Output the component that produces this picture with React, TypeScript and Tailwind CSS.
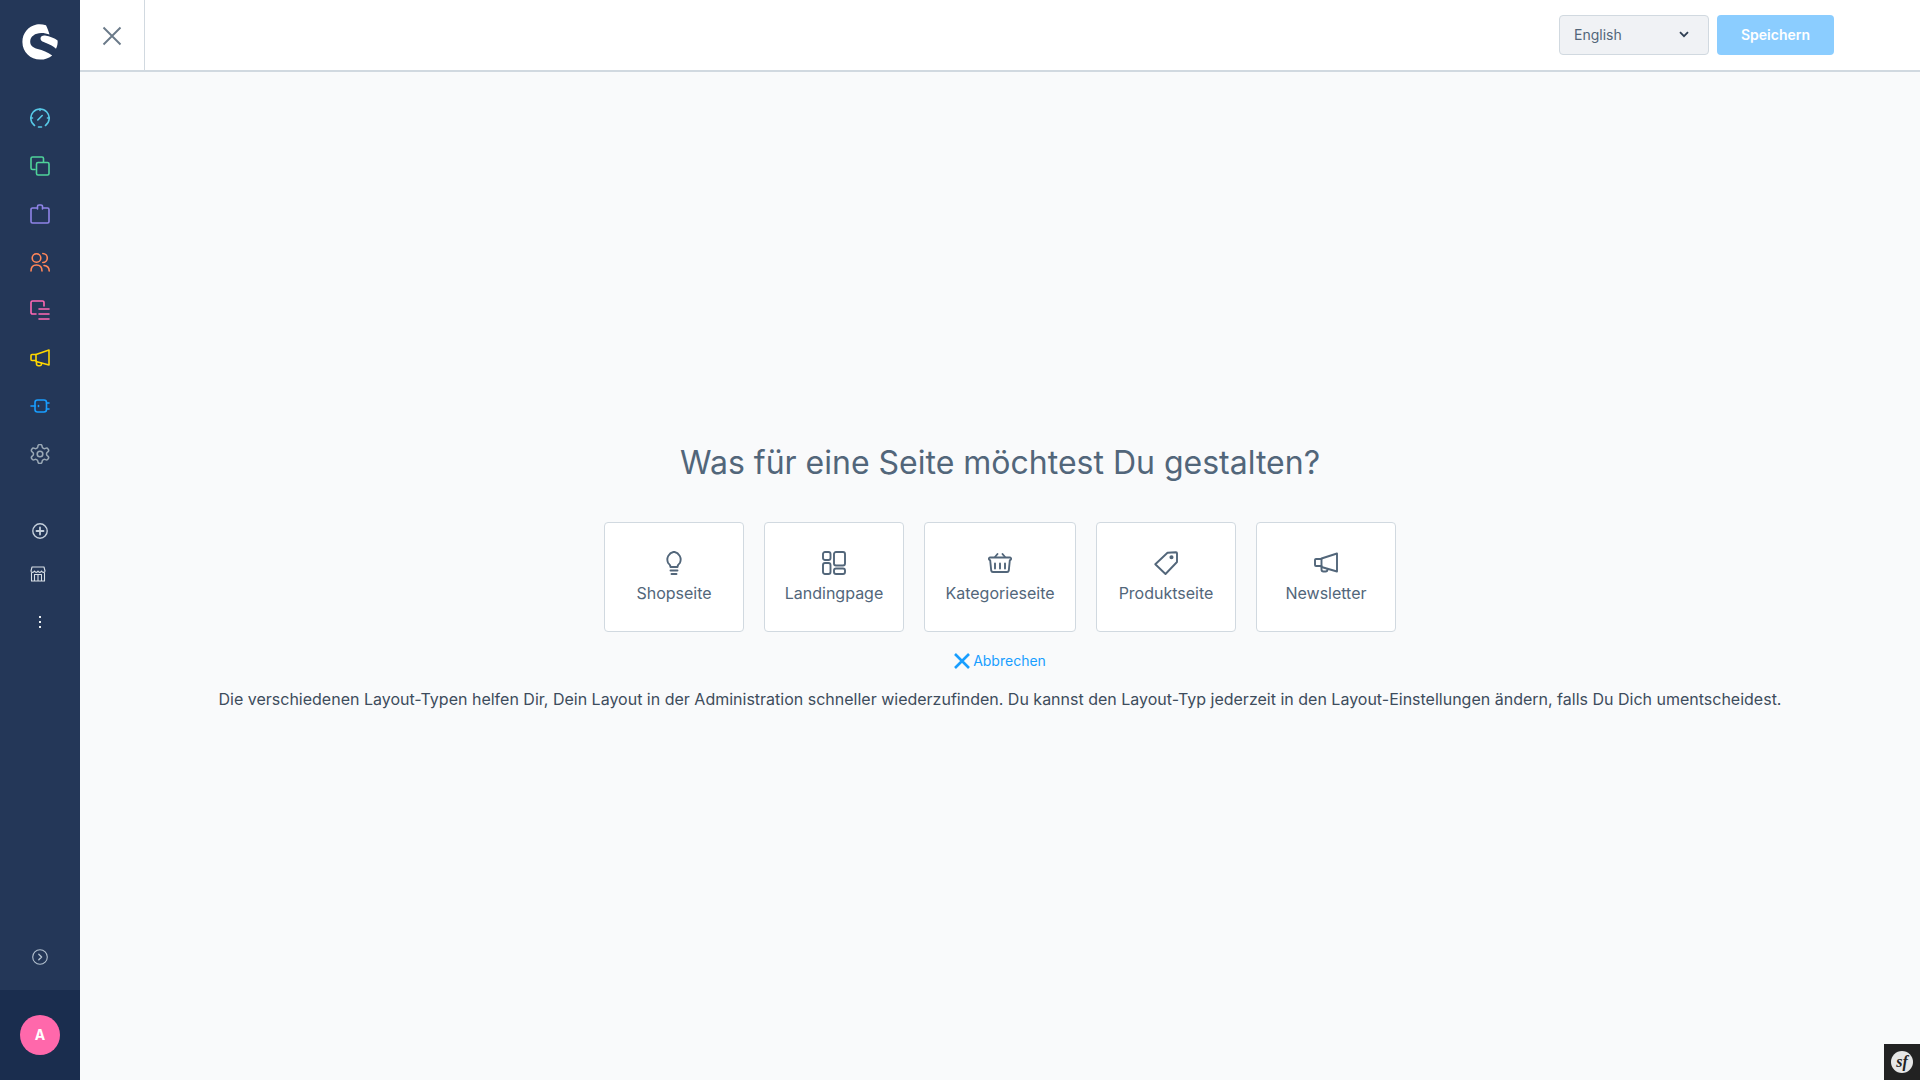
import type { ReactNode } from "react";

function NavIcon({ color, children }: { color: string; children: ReactNode }) {
  return (
    <div className="flex h-12 w-20 items-center justify-center">
      <svg width="20" height="20" viewBox="0 0 20 20" fill="none" stroke={color} strokeWidth="1.6" strokeLinecap="round" strokeLinejoin="round">
        {children}
      </svg>
    </div>
  );
}

const nav = [
  {
    color: "#57c8e6",
    icon: (
      <>
        <path d="M4.500 17.500A9.200 9.200 0 1 1 15.500 17.500" />
        <path d="M8.500 19h3M7.800 12l4.400-4.500M10 1v1.500M1 10h1.500M17.500 10H19" />
      </>
    ),
  },
  {
    color: "#4fd39a",
    icon: (
      <>
        <path d="M5 13.500H2.500a1.500 1.500 0 0 1-1.500-1.500V2.500A1.500 1.500 0 0 1 2.500 1H12a1.500 1.500 0 0 1 1.500 1.500V6" />
        <rect x="6.500" y="6.500" width="12.500" height="12.500" rx="1.500" />
      </>
    ),
  },
  {
    color: "#8f84e8",
    icon: (
      <>
        <path d="M7 4H2.500A1.500 1.500 0 0 0 1 5.500v12A1.500 1.500 0 0 0 2.500 19h15a1.500 1.500 0 0 0 1.500-1.500v-12A1.500 1.500 0 0 0 17.500 4H13" />
        <path d="M7.500 5V2.500A1.500 1.500 0 0 1 9 1h2a1.500 1.500 0 0 1 1.500 1.500V5" />
      </>
    ),
  },
  {
    color: "#ff8659",
    icon: (
      <>
        <circle cx="6.500" cy="6" r="4.300" />
        <path d="M1 19c0-3.800 2-6 5.500-6s5.500 2.200 5.500 6" />
        <path d="M12.800 1.500a4.500 4.500 0 0 1 0 9M14 13.500c3.300.3 5.200 2.300 5.200 5.500" />
      </>
    ),
  },
  {
    color: "#ff68b4",
    icon: (
      <>
        <path d="M14 6V2.500A1.500 1.500 0 0 0 12.500 1h-10A1.500 1.500 0 0 0 1 2.500v10A1.500 1.500 0 0 0 2.500 14H6" />
        <path d="M9 9h10M9 14h10M9 19h10" />
      </>
    ),
  },
  {
    color: "#ffd700",
    icon: (
      <>
        <path d="M6 6.500 19 2v15L6 13.500z" />
        <path d="M6 6.500H2a1 1 0 0 0-1 1v4a1 1 0 0 0 1 1h4" />
        <path d="M6.500 13.700v2.300a1.800 1.800 0 0 0 1.800 1.800h1.400a1.800 1.800 0 0 0 1.800-1.800v-.8" />
      </>
    ),
  },
  {
    color: "#189eff",
    icon: (
      <>
        <rect x="5" y="4" width="11.500" height="12" rx="2.500" />
        <path d="M1 10h4M16.500 7H19M16.500 13H19M8.500 9.500v1" />
      </>
    ),
  },
  {
    color: "#9aa8b5",
    icon: (
      <>
        <circle cx="10" cy="10" r="2.800" />
        <g transform="translate(-1.400 -1.400) scale(.95)">
          <path d="M12.220 2h-.44a2 2 0 0 0-2 2v.18a2 2 0 0 1-1 1.730l-.43.250a2 2 0 0 1-2 0l-.15-.08a2 2 0 0 0-2.730.730l-.22.380a2 2 0 0 0 .730 2.730l.15.100a2 2 0 0 1 1 1.720v.510a2 2 0 0 1-1 1.740l-.15.090a2 2 0 0 0-.730 2.730l.22.380a2 2 0 0 0 2.730.730l.15-.08a2 2 0 0 1 2 0l.430.250a2 2 0 0 1 1 1.730V20a2 2 0 0 0 2 2h.44a2 2 0 0 0 2-2v-.18a2 2 0 0 1 1-1.730l.430-.250a2 2 0 0 1 2 0l.150.080a2 2 0 0 0 2.730-.730l.220-.390a2 2 0 0 0-.730-2.730l-.150-.080a2 2 0 0 1-1-1.740v-.5a2 2 0 0 1 1-1.740l.150-.090a2 2 0 0 0 .730-2.730l-.220-.380a2 2 0 0 0-2.730-.730l-.150.080a2 2 0 0 1-2 0l-.430-.250a2 2 0 0 1-1-1.730V4a2 2 0 0 0-2-2z" />
        </g>
      </>
    ),
  },
];

const cards = [
  {
    label: "Shopseite",
    width: "w-[140px]",
    icon: (
      <>
        <path d="M8.500 16c0-1.800-1-2.800-2.400-4.100A7.900 7.900 0 0 1 12 .8a7.900 7.900 0 0 1 5.900 11.100C16.500 13.200 15.500 14.200 15.500 16z" />
        <path d="M8.500 19.500h7M9.500 23h5" />
      </>
    ),
  },
  {
    label: "Landingpage",
    width: "w-[140px]",
    icon: (
      <>
        <rect x="1" y="1" width="7.500" height="8" rx="2" />
        <rect x="1" y="12" width="7.500" height="11" rx="2" />
        <rect x="12" y="1" width="11" height="13.500" rx="2" />
        <rect x="12" y="17.500" width="11" height="5.500" rx="2" />
      </>
    ),
  },
  {
    label: "Kategorieseite",
    width: "w-[152px]",
    icon: (
      <>
        <path d="M2 6.500h20a1.200 1.200 0 0 1 .8 2L21.800 9.500l-1 10a1.800 1.800 0 0 1-1.800 1.500H5a1.800 1.800 0 0 1-1.800-1.500l-1-10-1-1a1.200 1.200 0 0 1 .8-2z" />
        <path d="M7 6l2.500-3M17 6l-2.500-3M7 12.500v5M12 12.500v5M17 12.500v5" />
      </>
    ),
  },
  {
    label: "Produktseite",
    width: "w-[140px]",
    icon: (
      <>
        <path d="M13.500 1.700 22 1.200a1 1 0 0 1 1 1V11L11.500 23 1.300 13.200z" />
        <circle cx="17.500" cy="6.300" r="1.100" fill="#52667a" />
      </>
    ),
  },
  {
    label: "Newsletter",
    width: "w-[140px]",
    icon: (
      <>
        <path d="M7.500 7.500 23 2.500v18L7.500 16z" />
        <path d="M7.500 8H2a1 1 0 0 0-1 1v5a1 1 0 0 0 1 1h5.500" />
        <path d="M7.500 16v2.500a2 2 0 0 0 2 2h2a2 2 0 0 0 2-2V18" />
      </>
    ),
  },
];

export default function App() {
  return (
    <div className="flex h-[1080px] w-[1920px] overflow-hidden bg-[#f9fafb] font-['Inter',sans-serif] text-[#52667a]">
      <aside className="flex w-20 shrink-0 flex-col bg-[#243758]">
        <div className="flex h-[84px] items-center justify-center">
          <svg width="36" height="36" viewBox="0 0 36 36" fill="#fff">
            <path d="M24 1.200C20.500 .2 17 0 14.500 .6 6 2.500.4 9.500.4 18c0 10 8 17.600 17.800 17.600 4.500 0 9-1.600 12-4.200-4.500-3.400-9.500-5.300-14.500-6.500-5-1.200-7.500-3.300-7.500-7.400 0-5 5-8.500 11-8.500 3 0 6 .6 8.300 1.600C26.500 7 25.500 4 24 1.200z" />
            <path d="M18.500 14.500c0-2 2-3.300 4.500-3 5 .8 9.500 2.700 12.600 5 .3 2.700-.3 6-1.600 8.200-2.500-2.600-6-4.300-10-5.800-3-1.100-5.500-2-5.500-4.400z" />
          </svg>
        </div>
        <nav className="mt-[10px] flex flex-col">
          {nav.map((item) => (
            <NavIcon key={item.color} color={item.color}>
              {item.icon}
            </NavIcon>
          ))}
        </nav>
        <div className="mt-[29px] flex h-12 items-center justify-center">
          <svg width="16" height="16" viewBox="0 0 16 16" fill="none" stroke="#c4cfdb" strokeWidth="1.400" strokeLinecap="round">
            <circle cx="8" cy="8" r="7.200" />
            <path d="M8 4.500v7M4.500 8h7" strokeWidth="1.800" />
          </svg>
        </div>
        <div className="flex h-[38px] items-center pl-[30px]">
          <svg width="16" height="16" viewBox="0 0 16 16" fill="none" stroke="#d8dfe6" strokeWidth="1.100" strokeLinejoin="round">
            <path d="M1 5 2 1h12l1 4c0 1-.8 1.400-1.600 1.400S12 6 11.500 5c-.4 1-1.200 1.400-1.800 1.400S8.400 6 8 5c-.4 1-1 1.400-1.700 1.400S5 6 4.500 5C4 6 3.400 6.400 2.600 6.400S1 6 1 5z" />
            <path d="M1.500 6.400V15h13V6.400M4.500 15V8.500h7V15M8 8.500V15" />
          </svg>
        </div>
        <div className="mt-[5px] flex h-12 items-center justify-center">
          <div className="flex flex-col gap-[3px]">
            <span className="h-[2px] w-[2px] bg-[#e9edf0]" />
            <span className="h-[2px] w-[2px] bg-[#e9edf0]" />
            <span className="h-[2px] w-[2px] bg-[#e9edf0]" />
          </div>
        </div>
        <div className="mt-auto flex h-[72px] items-center justify-center pt-[5px]">
          <svg width="16" height="16" viewBox="0 0 16 16" fill="none" stroke="#b3c0ce" strokeWidth="1.100" strokeLinecap="round" strokeLinejoin="round">
            <circle cx="8" cy="8" r="7.300" />
            <path d="m6.800 5.200 2.800 2.800-2.800 2.800" strokeWidth="1.400" />
          </svg>
        </div>
        <div className="flex h-[90px] items-center justify-center bg-[#1a2d4e]">
          <div className="flex h-10 w-10 items-center justify-center rounded-full bg-[#ff68ab] text-sm font-bold text-white">
            A
          </div>
        </div>
      </aside>

      <div className="relative flex min-w-0 flex-1 flex-col">
        <header className="flex h-[72px] shrink-0 items-center border-b-2 border-[#d1d9e0] bg-white">
          <div className="flex h-full w-[65px] items-center justify-center border-r border-[#d1d9e0] pt-[2px]">
            <svg width="20" height="20" viewBox="0 0 20 20" fill="none" stroke="#6a7a89" strokeWidth="1.900">
              <path d="m1.500 1.500 17 17M18.500 1.500l-17 17" />
            </svg>
          </div>
          <div className="ml-auto mr-[86px] flex items-center gap-2">
            <div className="flex h-10 w-[150px] items-center justify-between rounded border border-[#d1d9e0] bg-[#f0f2f5] pl-[14px] pr-[19px] text-sm text-[#52667a]">
              <span>English</span>
              <svg width="10" height="7" viewBox="0 0 10 7" fill="none" stroke="#2f3f53" strokeWidth="1.800" className="mb-[2px]">
                <path d="m1 1.200 4 4 4-4" />
              </svg>
            </div>
            <button className="h-10 w-[117px] rounded bg-[#8bcdff] text-sm font-semibold text-white">
              Speichern
            </button>
          </div>
        </header>

        <main className="flex flex-1 flex-col items-center pt-[368px]">
          <h1 className="text-[32px] leading-[46px] font-normal text-[#52667a]">
            Was für eine Seite möchtest Du gestalten?
          </h1>
          <div className="mt-[36px] flex gap-5">
            {cards.map((card) => (
              <div
                key={card.label}
                className={`flex h-[110px] ${card.width} flex-col items-center rounded border border-[#d1d9e0] bg-white pt-[28px]`}
              >
                <svg width="24" height="24" viewBox="0 0 24 24" fill="none" stroke="#52667a" strokeWidth="1.900" strokeLinecap="round" strokeLinejoin="round">
                  {card.icon}
                </svg>
                <span className="mt-[6px] text-base leading-6 text-[#52667a]">{card.label}</span>
              </div>
            ))}
          </div>
          <a className="mt-[17px] flex h-6 items-center gap-[3px] text-sm text-[#189eff]">
            <svg width="16" height="16" viewBox="0 0 16 16" fill="none" stroke="#189eff" strokeWidth="2.600">
              <path d="m1 1 14 14M15 1 1 15" />
            </svg>
            Abbrechen
          </a>
          <p className="mt-[14px] text-base leading-6 text-[#3d4c5c]">
            Die verschiedenen Layout-Typen helfen Dir, Dein Layout in der Administration schneller wiederzufinden. Du kannst den Layout-Typ jederzeit in den Layout-Einstellungen ändern, falls Du Dich umentscheidest.
          </p>
        </main>

        <div className="absolute right-0 bottom-0 flex h-9 w-9 items-center justify-center bg-[#222222]">
          <div className="flex h-[22px] w-[22px] items-center justify-center rounded-full bg-[#e6e6e6] font-['Liberation_Serif',serif] text-base font-bold text-[#222222] italic">
            sf
          </div>
        </div>
      </div>
    </div>
  );
}
